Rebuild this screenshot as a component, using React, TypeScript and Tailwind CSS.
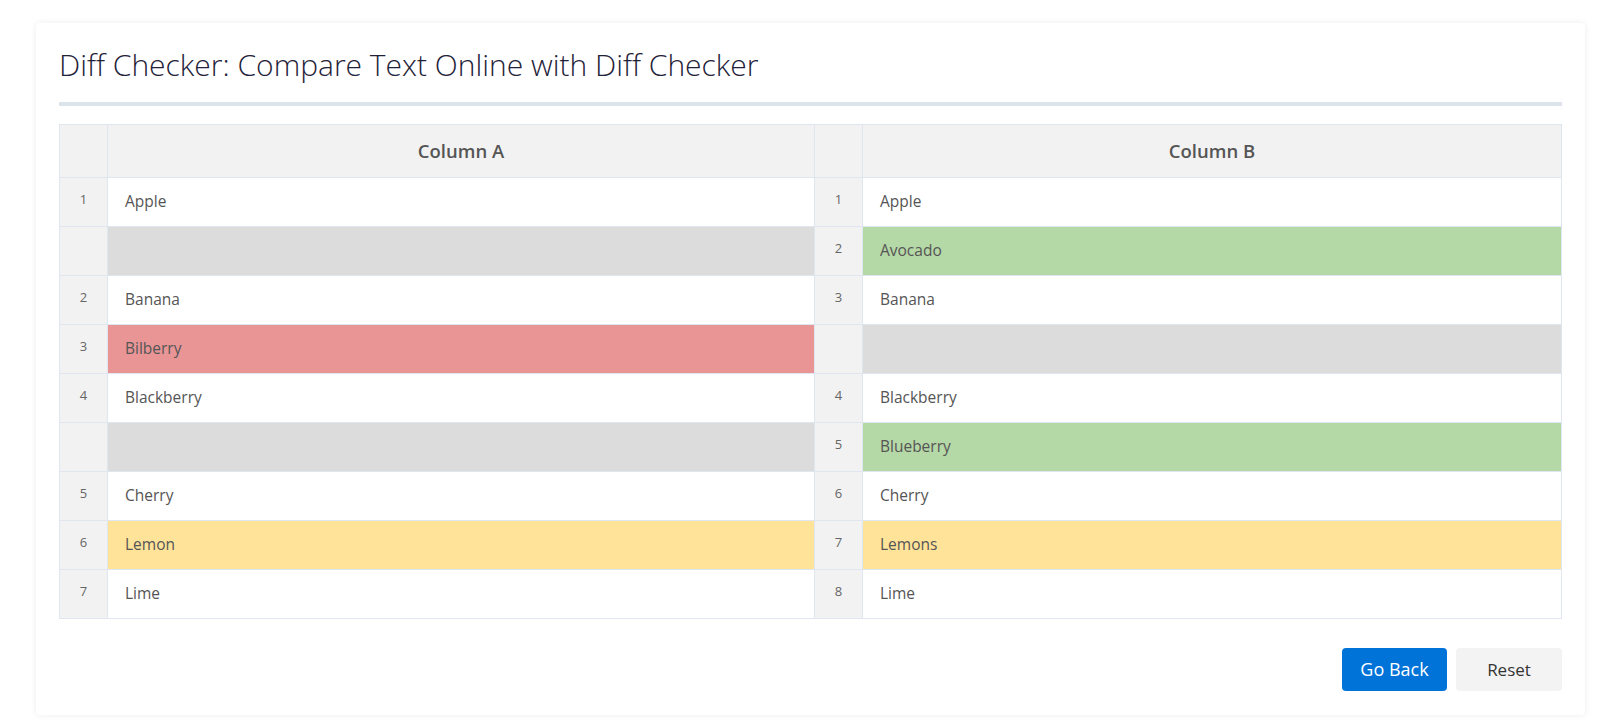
import React from "react";

type Cell = { n: number | null; text: string; tone?: "gray" | "red" | "green" | "yellow" };

const left: Cell[] = [
  { n: 1, text: "Apple" },
  { n: null, text: "", tone: "gray" },
  { n: 2, text: "Banana" },
  { n: 3, text: "Bilberry", tone: "red" },
  { n: 4, text: "Blackberry" },
  { n: null, text: "", tone: "gray" },
  { n: 5, text: "Cherry" },
  { n: 6, text: "Lemon", tone: "yellow" },
  { n: 7, text: "Lime" },
];

const right: Cell[] = [
  { n: 1, text: "Apple" },
  { n: 2, text: "Avocado", tone: "green" },
  { n: 3, text: "Banana" },
  { n: null, text: "", tone: "gray" },
  { n: 4, text: "Blackberry" },
  { n: 5, text: "Blueberry", tone: "green" },
  { n: 6, text: "Cherry" },
  { n: 7, text: "Lemons", tone: "yellow" },
  { n: 8, text: "Lime" },
];

const toneClass = {
  gray: "bg-[#dcdcdc]",
  red: "bg-[#e99596]",
  green: "bg-[#b5d8a7]",
  yellow: "bg-[#fee399]",
};

function Pair({ cell }: { cell: Cell }) {
  return (
    <>
      <td className="h-[49px] border border-[#dfe6ef] bg-[#f2f2f2] text-center align-middle text-[13px] text-[#666]">
        <span className="relative -top-[2px]">{cell.n ?? ""}</span>
      </td>
      <td
        className={`h-[49px] border border-[#dfe6ef] pl-[17px] align-middle text-[15.5px] text-[#555] ${
          cell.tone ? toneClass[cell.tone] : "bg-white"
        }`}
      >
        {cell.text}
      </td>
    </>
  );
}

export default function App() {
  return (
    <div className="min-h-screen bg-white pt-[23px] pl-[36px] font-['Open_Sans',sans-serif]">
      <div className="w-[1549px] rounded-sm bg-white px-[23px] pt-[22px] pb-[24px] shadow-[0_0_6px_rgba(0,0,0,0.08)]">
        <h1 className="text-[30px] font-light leading-[40px] text-[#1f2238]">
          Diff Checker: Compare Text Online with Diff Checker
        </h1>
        <div className="mt-[17px] h-[4px] bg-[#dde3ea]" />

        <table className="mt-[18px] w-full table-fixed border-collapse">
          <colgroup>
            <col className="w-[48px]" />
            <col className="w-[707px]" />
            <col className="w-[48px]" />
            <col />
          </colgroup>
          <thead>
            <tr>
              <th className="h-[53px] border border-[#dfe6ef] bg-[#f2f2f2]" />
              <th className="h-[53px] border border-[#dfe6ef] bg-[#f2f2f2] text-center text-[18.5px] font-semibold text-[#555]">
                Column A
              </th>
              <th className="h-[53px] border border-[#dfe6ef] bg-[#f2f2f2]" />
              <th className="h-[53px] border border-[#dfe6ef] bg-[#f2f2f2] text-center text-[18.5px] font-semibold text-[#555]">
                Column B
              </th>
            </tr>
          </thead>
          <tbody>
            {left.map((cell, i) => (
              <tr key={i}>
                <Pair cell={cell} />
                <Pair cell={right[i]} />
              </tr>
            ))}
          </tbody>
        </table>

        <div className="mt-[29px] flex justify-end gap-[9px]">
          <button className="h-[43px] w-[105px] rounded-[4px] bg-[#0073d9] text-[18px] text-white">
            Go Back
          </button>
          <button className="h-[43px] w-[106px] rounded-[4px] bg-[#f3f3f3] text-[17px] text-[#333]">
            Reset
          </button>
        </div>
      </div>
    </div>
  );
}
